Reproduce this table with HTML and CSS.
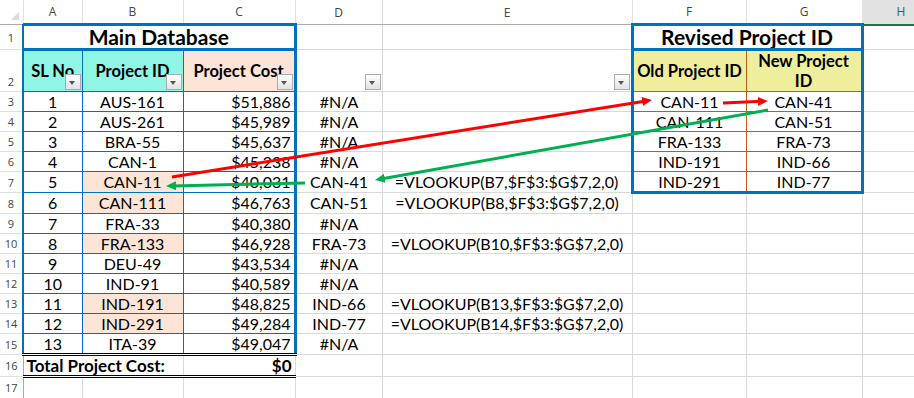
FILE: index.html
```html
<!DOCTYPE html>
<html lang="en">
<head>
    <meta charset="UTF-8">
    <title>VLOOKUP - Revised Project ID</title>
    <link rel="stylesheet" href="styles.css">
</head>
<body>
<div class="sheet">
    <table class="grid">
        <colgroup>
            <col class="c-head">
            <col class="c-a">
            <col class="c-b">
            <col class="c-c">
            <col class="c-d">
            <col class="c-e">
            <col class="c-f">
            <col class="c-g">
            <col class="c-h">
        </colgroup>
        <tr class="colhead">
            <th class="corner"><span class="tri"></span></th>
            <th>A</th><th>B</th><th>C</th><th>D</th><th>E</th><th>F</th><th>G</th>
            <th class="sel">H</th>
        </tr>
        <tr class="r-title">
            <th class="rowhead">1</th>
            <td colspan="3" class="main-title">Main Database</td>
            <td></td><td></td>
            <td colspan="2" class="rev-title">Revised Project ID</td>
            <td></td>
        </tr>
        <tr class="r-head">
            <th class="rowhead bottom">2</th>
            <td class="db db-l hd aqua">SL No<span class="filter"></span></td>
            <td class="db hd aqua">Project ID<span class="filter"></span></td>
            <td class="db db-r hd peach">Project Cost<span class="filter"></span></td>
            <td class="hd"><span class="filter"></span></td>
            <td class="hd"><span class="filter"></span></td>
            <td class="rv rv-l hd lime">Old Project ID</td>
            <td class="rv rv-r hd lime">New Project<br>ID</td>
            <td></td>
        </tr>
        <tr>
            <th class="rowhead">3</th>
            <td class="db db-l num">1</td><td class="db id">AUS-161</td><td class="db db-r cost">$51,886</td>
            <td class="res">#N/A</td><td></td>
            <td class="rv rv-l id">CAN-11</td><td class="rv rv-r id">CAN-41</td><td></td>
        </tr>
        <tr>
            <th class="rowhead">4</th>
            <td class="db db-l num">2</td><td class="db id">AUS-261</td><td class="db db-r cost">$45,989</td>
            <td class="res">#N/A</td><td></td>
            <td class="rv rv-l id">CAN-111</td><td class="rv rv-r id">CAN-51</td><td></td>
        </tr>
        <tr>
            <th class="rowhead">5</th>
            <td class="db db-l num">3</td><td class="db id">BRA-55</td><td class="db db-r cost">$45,637</td>
            <td class="res">#N/A</td><td></td>
            <td class="rv rv-l id">FRA-133</td><td class="rv rv-r id">FRA-73</td><td></td>
        </tr>
        <tr>
            <th class="rowhead">6</th>
            <td class="db db-l num">4</td><td class="db id">CAN-1</td><td class="db db-r cost">$45,238</td>
            <td class="res">#N/A</td><td></td>
            <td class="rv rv-l id">IND-191</td><td class="rv rv-r id">IND-66</td><td></td>
        </tr>
        <tr>
            <th class="rowhead">7</th>
            <td class="db db-l num">5</td><td class="db id peach">CAN-11</td><td class="db db-r cost">$40,031</td>
            <td class="res">CAN-41</td><td class="formula">=VLOOKUP(B7,$F$3:$G$7,2,0)</td>
            <td class="rv rv-l rv-b id">IND-291</td><td class="rv rv-r rv-b id">IND-77</td><td></td>
        </tr>
        <tr>
            <th class="rowhead">8</th>
            <td class="db db-l num">6</td><td class="db id peach">CAN-111</td><td class="db db-r cost">$46,763</td>
            <td class="res">CAN-51</td><td class="formula">=VLOOKUP(B8,$F$3:$G$7,2,0)</td>
            <td></td><td></td><td></td>
        </tr>
        <tr>
            <th class="rowhead">9</th>
            <td class="db db-l num">7</td><td class="db id">FRA-33</td><td class="db db-r cost">$40,380</td>
            <td class="res">#N/A</td><td></td>
            <td></td><td></td><td></td>
        </tr>
        <tr>
            <th class="rowhead">10</th>
            <td class="db db-l num">8</td><td class="db id peach">FRA-133</td><td class="db db-r cost">$46,928</td>
            <td class="res">FRA-73</td><td class="formula">=VLOOKUP(B10,$F$3:$G$7,2,0)</td>
            <td></td><td></td><td></td>
        </tr>
        <tr>
            <th class="rowhead">11</th>
            <td class="db db-l num">9</td><td class="db id">DEU-49</td><td class="db db-r cost">$43,534</td>
            <td class="res">#N/A</td><td></td>
            <td></td><td></td><td></td>
        </tr>
        <tr>
            <th class="rowhead">12</th>
            <td class="db db-l num">10</td><td class="db id">IND-91</td><td class="db db-r cost">$40,589</td>
            <td class="res">#N/A</td><td></td>
            <td></td><td></td><td></td>
        </tr>
        <tr>
            <th class="rowhead">13</th>
            <td class="db db-l num">11</td><td class="db id peach">IND-191</td><td class="db db-r cost">$48,825</td>
            <td class="res">IND-66</td><td class="formula">=VLOOKUP(B13,$F$3:$G$7,2,0)</td>
            <td></td><td></td><td></td>
        </tr>
        <tr>
            <th class="rowhead">14</th>
            <td class="db db-l num">12</td><td class="db id peach">IND-291</td><td class="db db-r cost">$49,284</td>
            <td class="res">IND-77</td><td class="formula">=VLOOKUP(B14,$F$3:$G$7,2,0)</td>
            <td></td><td></td><td></td>
        </tr>
        <tr class="r-end">
            <th class="rowhead">15</th>
            <td class="db db-l num">13</td><td class="db id">ITA-39</td><td class="db db-r cost">$49,047</td>
            <td class="res">#N/A</td><td></td>
            <td></td><td></td><td></td>
        </tr>
        <tr class="r-total">
            <th class="rowhead">16</th>
            <td colspan="2" class="total label">Total Project Cost:</td>
            <td class="total cost">$0</td>
            <td></td><td></td><td></td><td></td><td></td>
        </tr>
        <tr class="r-last">
            <th class="rowhead">17</th>
            <td></td><td></td><td></td><td></td><td></td><td></td><td></td><td></td>
        </tr>
    </table>

    <!-- lookup arrows drawn over the cells -->
    <svg class="arrows" width="914" height="398" viewBox="0 0 914 398">
        <defs>
            <marker id="head-red" markerUnits="userSpaceOnUse" markerWidth="11" markerHeight="10" refX="4" refY="4.5" orient="auto">
                <path d="M0,0 L10,4.5 L0,9 z" fill="#ff0000"/>
            </marker>
            <marker id="head-green" markerUnits="userSpaceOnUse" markerWidth="11" markerHeight="10" refX="4" refY="4.5" orient="auto">
                <path d="M0,0 L10,4.5 L0,9 z" fill="#00b050"/>
            </marker>
        </defs>
        <line x1="172" y1="177" x2="646.1" y2="100.9" class="red" marker-end="url(#head-red)"/>
        <line x1="723" y1="103" x2="762" y2="101.3" class="red" marker-end="url(#head-red)"/>
        <line x1="768" y1="110" x2="380.9" y2="179" class="green" marker-end="url(#head-green)"/>
        <line x1="305" y1="183" x2="172" y2="185.9" class="green" marker-end="url(#head-green)"/>
    </svg>
</div>
</body>
</html>
```

FILE: styles.css
```css
body {
    margin: 0;
    background: #fff;
    overflow: hidden;
}
.sheet {
    position: relative;
    width: 914px;
    height: 398px;
    overflow: hidden;
}
.grid {
    border-collapse: collapse;
    table-layout: fixed;
    width: 940px;
    font-family: Lato, "Liberation Sans", sans-serif;
    font-size: 16px;
    color: #000;
}
.c-head { width: 23px; }
.c-a { width: 59px; }
.c-b { width: 101px; }
.c-c { width: 112px; }
.c-d { width: 87px; }
.c-e { width: 250px; }
.c-f { width: 114px; }
.c-g { width: 116px; }
.c-h { width: 78px; }

td {
    border: 1px solid #d9d9d9;
    padding: 0 3px;
    height: 19px;
    line-height: 18px;
    white-space: nowrap;
    overflow: hidden;
    vertical-align: middle;
}

/* column and row headings */
.colhead th {
    height: 23px;
    padding: 0;
    font-family: "Open Sans", sans-serif;
    font-weight: normal;
    font-size: 12px;
    color: #444;
    background: #fff;
    border-right: 1px solid #e1e1e1;
    border-bottom: 1px solid #ababab;
}
.colhead th.sel {
    background: #e1e1e1;
    color: #217346;
    border-bottom: 2px solid #217346;
}
.corner {
    position: relative;
}
.tri {
    position: absolute;
    right: 4px;
    bottom: 4px;
    width: 0;
    height: 0;
    border-left: 8px solid transparent;
    border-bottom: 8px solid #dcdcdc;
}
.rowhead {
    padding: 0;
    font-family: "Open Sans", sans-serif;
    font-weight: normal;
    font-size: 11px;
    color: #444;
    text-align: center;
    border-right: 1px solid #ababab;
    border-bottom: 1px solid #e1e1e1;
}
.rowhead.bottom {
    vertical-align: bottom;
    padding-bottom: 2px;
}
.r-title td { height: 22px; }
.r-head td { height: 36px; }
.r-total td { height: 19px; }
.r-last td { height: 20px; }

/* Main Database block */
.main-title {
    text-align: center;
    font-weight: bold;
    font-size: 21px;
    border: 3px solid #0070c0;
    border-left-width: 2px;
}
.db { border: 1px solid #0070c0; }
.db-l { border-left: 2px solid #0070c0; }
.db-r { border-right: 3px solid #0070c0; }
.hd {
    position: relative;
    text-align: center;
    font-weight: bold;
    font-size: 16.5px;
}
.aqua { background: #8ff5e4; }
.peach { background: #fce4d6; }
.lime { background: #eeee9c; }
.num, .id, .res { text-align: center; }
.cost { text-align: right; }
.formula { text-align: center; }
.r-head td.db, .r-head td.rv { border-top: 3px solid #0070c0; }

/* last data row and the totals line */
.r-end td.db { border-bottom: 3px double #000; }
.total {
    font-weight: bold;
    font-size: 17px;
    border-top: 3px double #000;
    border-bottom: 3px double #000;
}
.total.label { text-align: left; }

/* Revised Project ID block */
.rev-title {
    text-align: center;
    font-weight: bold;
    font-size: 21px;
    border: 3px solid #0070c0;
}
.rv { border: 1px solid #c55a11; }
.rv-l { border-left: 3px solid #0070c0; }
.rv-r { border-right: 3px solid #0070c0; }
.rv-b { border-bottom: 3px solid #0070c0; }
.r-head .rv { line-height: 20px; }

/* autofilter drop-down button */
.filter {
    position: absolute;
    right: 1px;
    bottom: 1px;
    width: 16px;
    height: 16px;
    box-sizing: border-box;
    border: 1px solid #ababab;
    background: linear-gradient(#ffffff, #e3e3e3);
}
.filter::after {
    content: "";
    position: absolute;
    left: 3.5px;
    top: 5.5px;
    border-left: 3.5px solid transparent;
    border-right: 3.5px solid transparent;
    border-top: 4px solid #555;
}

.arrows {
    position: absolute;
    top: 0;
    left: 0;
    pointer-events: none;
}
.arrows line {
    stroke-width: 3;
}
.arrows .red { stroke: #ff0000; }
.arrows .green { stroke: #00b050; }
```
